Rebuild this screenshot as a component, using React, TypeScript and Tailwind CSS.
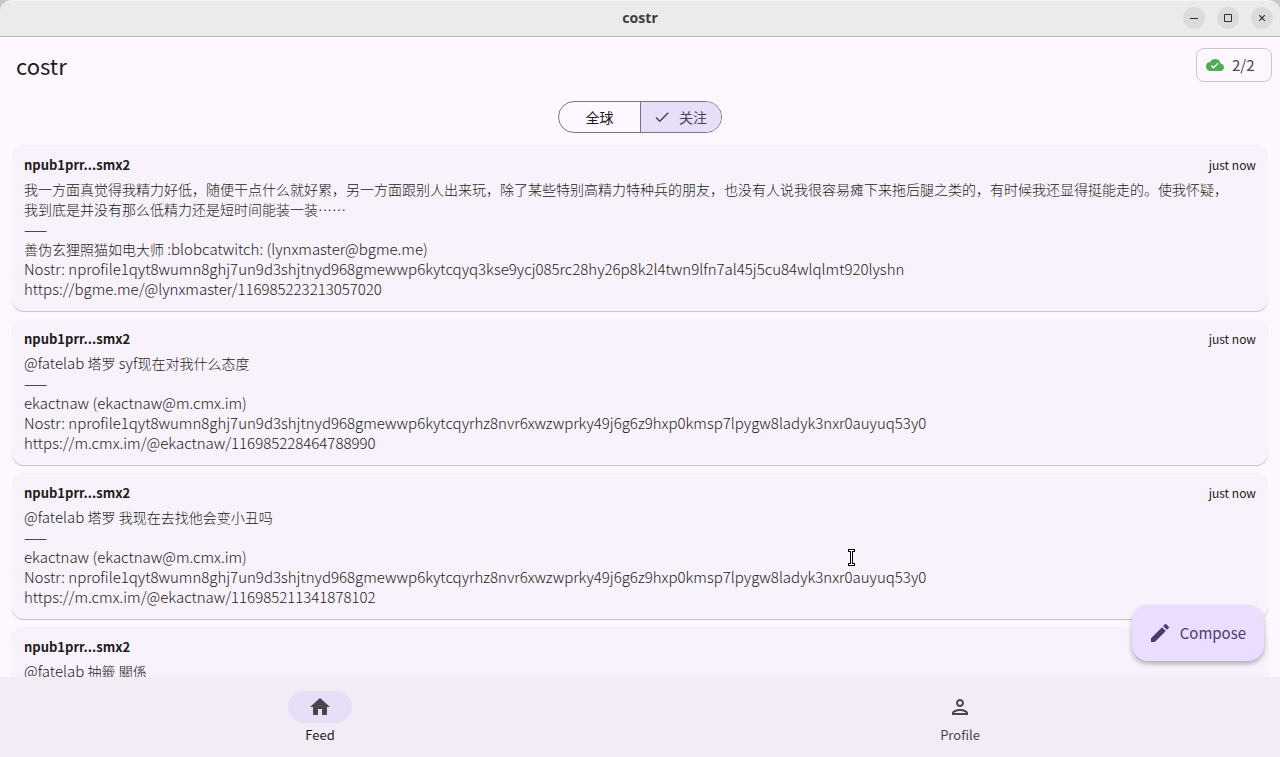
import type { ReactNode } from "react";
import { MdCloudDone, MdEdit, MdHome, MdOutlinePerson, MdCheck } from "react-icons/md";

interface Post {
  id: string;
  author: string;
  time: string;
  lines: string[];
}

const posts: Post[] = [
  {
    id: "116985223213057020",
    author: "npub1prr...smx2",
    time: "just now",
    lines: [
      "我一方面真觉得我精力好低，随便干点什么就好累，另一方面跟别人出来玩，除了某些特别高精力特种兵的朋友，也没有人说我很容易瘫下来拖后腿之类的，有时候我还显得挺能走的。使我怀疑，我到底是并没有那么低精力还是短时间能装一装……",
      "——",
      "善伪玄狸照猫如电大师 :blobcatwitch: (lynxmaster@bgme.me)",
      "Nostr: nprofile1qyt8wumn8ghj7un9d3shjtnyd968gmewwp6kytcqyq3kse9ycj085rc28hy26p8k2l4twn9lfn7al45j5cu84wlqlmt920lyshn",
      "https://bgme.me/@lynxmaster/116985223213057020",
    ],
  },
  {
    id: "116985228464788990",
    author: "npub1prr...smx2",
    time: "just now",
    lines: [
      "@fatelab 塔罗 syf现在对我什么态度",
      "——",
      "ekactnaw (ekactnaw@m.cmx.im)",
      "Nostr: nprofile1qyt8wumn8ghj7un9d3shjtnyd968gmewwp6kytcqyrhz8nvr6xwzwprky49j6g6z9hxp0kmsp7lpygw8ladyk3nxr0auyuq53y0",
      "https://m.cmx.im/@ekactnaw/116985228464788990",
    ],
  },
  {
    id: "116985211341878102",
    author: "npub1prr...smx2",
    time: "just now",
    lines: [
      "@fatelab 塔罗 我现在去找他会变小丑吗",
      "——",
      "ekactnaw (ekactnaw@m.cmx.im)",
      "Nostr: nprofile1qyt8wumn8ghj7un9d3shjtnyd968gmewwp6kytcqyrhz8nvr6xwzwprky49j6g6z9hxp0kmsp7lpygw8ladyk3nxr0auyuq53y0",
      "https://m.cmx.im/@ekactnaw/116985211341878102",
    ],
  },
  {
    id: "next",
    author: "npub1prr...smx2",
    time: "just now",
    lines: ["@fatelab 抽籤 關係"],
  },
];

function WindowButton({ label, children }: { label: string; children: ReactNode }) {
  return (
    <button
      type="button"
      aria-label={label}
      className="flex size-[22px] items-center justify-center rounded-full bg-[#dbdbdb] text-[#2e2e2e]"
    >
      <svg viewBox="0 0 16 16" className="size-4" fill="none" stroke="currentColor" aria-hidden="true">
        {children}
      </svg>
    </button>
  );
}

function TitleBar() {
  return (
    <div className="bg-[#c9c9c9]">
      <header className="grid h-[37px] grid-cols-[1fr_auto_1fr] items-center rounded-t-xl border-t border-b border-t-[#f6f6f6] border-b-[#bdbabd] bg-[#ebebeb] px-[7px] pb-0.5">
        <span />
        <span className="font-['Noto_Sans',sans-serif] text-sm font-bold text-[#3d3d3d]">costr</span>
        <div className="flex justify-end gap-3">
          <WindowButton label="Minimize">
            <path d="M4 8.500h8" strokeWidth="1" />
          </WindowButton>
          <WindowButton label="Maximize">
            <path d="M4.500 4.500h7v7h-7z" strokeWidth="1" />
          </WindowButton>
          <WindowButton label="Close">
            <path d="M5.200 5.200l5.600 5.600M10.800 5.200l-5.600 5.600" strokeWidth="1.2" />
          </WindowButton>
        </div>
      </header>
    </div>
  );
}

function FeedTabs() {
  return (
    <div className="flex justify-center pb-2">
      <div
        role="group"
        className="grid h-8 grid-cols-2 overflow-hidden rounded-full border border-[#79747e] text-sm"
      >
        <button type="button" aria-pressed="false" className="w-[81px] text-[#1d1b20]">
          全球
        </button>
        <button
          type="button"
          aria-pressed="true"
          className="flex w-[81px] items-center gap-2 border-l border-[#79747e] bg-[#e8def8] pl-3 text-[#4a4458]"
        >
          <MdCheck className="size-[18px]" aria-hidden="true" />
          关注
        </button>
      </div>
    </div>
  );
}

/* Han text is set one size below Latin so that both look equally large. */
function MixedText({ text }: { text: string }) {
  const runs = text.match(/[\u2014\u2026\u3000-\u9fff\uff00-\uffef]+|[^\u2014\u2026\u3000-\u9fff\uff00-\uffef]+/g) ?? [];
  return (
    <>
      {runs.map((run, i) =>
        /[\u2014\u2026\u3000-\u9fff\uff00-\uffef]/.test(run) ? (
          <span key={i} className="text-sm leading-5">
            {run}
          </span>
        ) : (
          run
        ),
      )}
    </>
  );
}

function PostCard({ post }: { post: Post }) {
  return (
    <article className="rounded-xl bg-[#f7f2fb] p-3 shadow-[0_1px_1px_rgba(0,0,0,0.22)]">
      <div className="mb-1.5 flex items-center justify-between leading-4">
        <span className="text-[13px] font-bold">{post.author}</span>
        <time className="text-xs">{post.time}</time>
      </div>
      <div className="pr-4 text-[15px] leading-5 font-light break-words">
        {post.lines.map((line, i) => (
          <p key={i} className="min-h-5">
            <MixedText text={line} />
          </p>
        ))}
      </div>
    </article>
  );
}

function NavItem({ label, active, icon }: { label: string; active?: boolean; icon: ReactNode }) {
  return (
    <a
      href={`#${label.toLowerCase()}`}
      aria-current={active ? "page" : undefined}
      className={`flex flex-1 flex-col items-center gap-1 text-[13px] leading-4 ${
        active ? "text-[#1d1b20]" : "text-[#49454f]"
      }`}
    >
      <span
        className={`flex h-8 w-16 items-center justify-center rounded-full text-2xl text-[#49454f] ${
          active ? "bg-[#e8def8]" : ""
        }`}
      >
        {icon}
      </span>
      {label}
    </a>
  );
}

export default function App() {
  return (
    <div
      lang="zh-CN"
      className="flex h-screen flex-col overflow-hidden bg-[#fef7ff] font-['Noto_Sans_CJK_SC',sans-serif] text-[#1d1b20]"
    >
      <TitleBar />
      <div className="flex h-16 shrink-0 items-start justify-between pt-[11px] pr-2 pl-4">
        <h1 className="text-[22px] leading-[34px]">costr</h1>
        <button
          type="button"
          className="flex h-[34px] w-[76px] items-center gap-2 rounded-lg border border-[#cac4d0] pl-[9px] text-[15px] text-[#49454f]"
        >
          <MdCloudDone className="size-[18px] text-[#4caf50]" aria-hidden="true" />
          2/2
        </button>
      </div>
      <div className="relative flex min-h-0 flex-1 flex-col">
        <FeedTabs />
        <main className="flex min-h-0 flex-1 flex-col gap-2 overflow-hidden px-3 pt-1 *:shrink-0">
          {posts.map((post) => (
            <PostCard key={post.id} post={post} />
          ))}
        </main>
        <button
          type="button"
          className="absolute right-4 bottom-4 flex h-14 items-center gap-2 rounded-2xl bg-[#eaddff] pr-[18px] pl-4 text-[15px] text-[#4a3a72] shadow-[0_3px_5px_rgba(0,0,0,0.28)]"
        >
          <MdEdit className="size-6" aria-hidden="true" />
          Compose
        </button>
        <svg
          viewBox="0 0 7 17"
          className="absolute top-[448px] left-[848px] h-[17px] w-[7px]"
          aria-hidden="true"
        >
          <path d="M0 0h7v3H5v11h2v3H0v-3h2V3H0z" fill="#000" />
          <path d="M1 1h5v1H4v13h2v1H1v-1h2V2H1z" fill="#fff" />
        </svg>
      </div>
      <nav className="flex h-20 shrink-0 bg-[#f2ecf6] pt-[14px]">
        <NavItem label="Feed" active icon={<MdHome aria-hidden="true" />} />
        <NavItem label="Profile" icon={<MdOutlinePerson aria-hidden="true" />} />
      </nav>
    </div>
  );
}
